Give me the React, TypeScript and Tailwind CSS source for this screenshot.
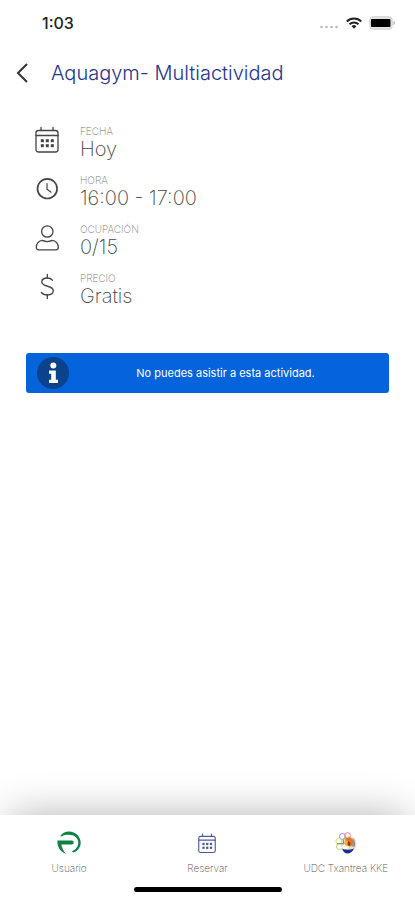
import React from 'react';

const CalendarIcon: React.FC<{ className?: string; strokeWidth?: number }> = ({ className, strokeWidth = 1.3 }) => (
  <svg viewBox="0 0 26 28" fill="none" stroke="currentColor" strokeWidth={strokeWidth} strokeLinecap="round" className={className} aria-hidden="true">
    <rect x="2" y="4.500" width="22" height="21.500" rx="2.500" />
    <path d="M2 9.500h22M7 1.500v3M19 1.500v3" />
    <g fill="currentColor" stroke="none">
      <rect x="6.800" y="13.200" width="3" height="3" />
      <rect x="11.800" y="13.200" width="3" height="3" />
      <rect x="16.800" y="13.200" width="3" height="3" />
      <rect x="6.800" y="18.200" width="3" height="3" />
      <rect x="11.800" y="18.200" width="3" height="3" />
      <rect x="16.800" y="18.200" width="3" height="3" />
    </g>
  </svg>
);

const ClockIcon = () => (
  <svg viewBox="0 0 26 28" fill="none" stroke="currentColor" strokeLinecap="round" className="h-7 w-[26px]" aria-hidden="true">
    <circle cx="13.300" cy="13.700" r="9.800" strokeWidth="1.700" />
    <path d="M13 8.500v5.700l4 3" strokeWidth="1.200" />
  </svg>
);

const PersonIcon = () => (
  <svg viewBox="0 0 26 28" fill="none" stroke="currentColor" strokeWidth="1.300" className="h-7 w-[26px]" aria-hidden="true">
    <circle cx="13.300" cy="7.500" r="5.700" />
    <path d="M8.500 16.400c3 1.500 6.600 1.500 9.600 0 3.800.3 6.200 3.400 6.200 6.900 0 1.500-.8 2.500-2.300 2.500H4.600c-1.500 0-2.300-1-2.300-2.500 0-3.500 2.400-6.600 6.200-6.900z" />
  </svg>
);

const DollarIcon = () => (
  <svg viewBox="0 0 26 28" fill="none" stroke="currentColor" strokeWidth="1.300" strokeLinecap="round" className="h-7 w-[26px]" aria-hidden="true">
    <path d="M13.300 1.500V5M13.300 22v3.500" />
    <path d="M18.400 7.200C17.200 5.700 15.500 5 13.300 5 10 5 7.800 6.600 7.800 9c0 5.500 11.500 3 11.500 8.600 0 2.700-2.300 4.400-5.800 4.400-2.700 0-4.900-.9-6.100-2.500" />
  </svg>
);

// "P" abierta dentro de un círculo
const UserLogo = () => (
  <svg viewBox="0 0 24 24" fill="none" className="size-6" aria-hidden="true">
    <path d="M3 5.200C5 2.200 8.300.5 12 .5 18.500.5 23.700 5.500 23.700 11.800c0 4.700-3.200 8.600-7.700 9.700l-1-1.300c3.800-1.400 6.300-4.600 6.300-8.400 0-4.900-4-8-9.300-8-3 0-5.600.5-7 1.400z" fill="#0d8045" />
    <path d="M.4 9.600h14.400a1.900 1.900 0 0 1 0 3.800H4.300c.6 3.600 2.100 6.600 4.900 9.600C3.800 21.300.1 16.600.4 9.600z" fill="#0d8045" />
  </svg>
);

const ClubLogo = () => (
  <svg viewBox="0 0 22 22" fill="none" className="size-[22px]" aria-hidden="true">
    <circle cx="13.500" cy="12" r="8" fill="#eadbd0" />
    <circle cx="7.500" cy="4.500" r="3" stroke="#8b91d0" />
    <circle cx="12.500" cy="3.700" r="3" stroke="#ef7b8d" />
    <circle cx="3.800" cy="9.500" r="3" stroke="#d8dc70" />
    <circle cx="4.500" cy="14.500" r="3" stroke="#b5d37a" />
    <path d="M2 11.500h7M8.500 8v8" stroke="#6aa878" />
    <path d="M10.500 6.500c3-2.500 8-.5 8 4l-2.500 4-3-1-3 1z" fill="#d97a20" />
    <path d="M10 8l3 1 1 4-3 2-2-3z" fill="#f0b52c" />
    <path d="M13 9l2.500 2-1 3.500-2-2z" fill="#9c2833" />
    <path d="M17.500 6c2.500 2 3.500 6 2 9l-3-1c1.500-2 2-5 1-8z" fill="#98908c" />
    <path d="M9 12l5 4-6 2-2-3z" fill="#fff" />
    <path d="M7 16.500c3 1.600 8 1.600 12 0-1.500 3.500-4 5-6.500 5S8.200 19.800 7 16.500z" fill="#17308f" />
  </svg>
);

const details = [
  { label: 'FECHA', value: 'Hoy', icon: <CalendarIcon className="h-7 w-[26px]" /> },
  { label: 'HORA', value: '16:00 - 17:00', icon: <ClockIcon /> },
  { label: 'OCUPACIÓN', value: '0/15', icon: <PersonIcon /> },
  { label: 'PRECIO', value: 'Gratis', icon: <DollarIcon /> },
];

const tabs = [
  { name: 'Usuario', icon: <UserLogo /> },
  { name: 'Reservar', icon: <CalendarIcon className="h-[21px] w-5 text-[#4c5a9c]" strokeWidth={1.5} /> },
  { name: 'UDC Txantrea KKE', icon: <ClubLogo /> },
];

const StatusBar = () => (
  <div className="flex h-[46px] items-center justify-between pr-[19px] pl-[42px] text-[#222]">
    <span className="font-['Inter',sans-serif] text-base font-medium">1:03</span>
    <div className="flex items-center gap-[7px]">
      <svg viewBox="0 0 20 4" className="mt-2 h-1 w-5" fill="#b8b8b8" aria-hidden="true">
        <circle cx="2.500" cy="2" r="1.300" />
        <circle cx="7.500" cy="2" r="1.300" />
        <circle cx="12.500" cy="2" r="1.300" />
        <circle cx="17.500" cy="2" r="1.300" />
      </svg>
      <svg viewBox="0 0 16 12" className="h-3 w-4" fill="none" stroke="currentColor" strokeWidth="2" aria-hidden="true">
        <path d="M.8 4.500a10.300 10.300 0 0 1 14.400 0M3.500 7.300a6.400 6.400 0 0 1 9 0" />
        <path d="M5.600 9.300a3.400 3.400 0 0 1 4.800 0L8 11.800z" fill="currentColor" stroke="none" />
      </svg>
      <svg viewBox="0 0 27 14" className="h-[14px] w-[27px]" aria-hidden="true">
        <rect x="0.800" y="0.800" width="22.400" height="12.400" rx="3" fill="#e4e4e4" stroke="#cfcfcf" />
        <rect x="2" y="3" width="19.500" height="8" rx="1" fill="#000" />
        <path d="M24.500 5c2 .6 2 3.400 0 4z" fill="#b5b5b5" />
      </svg>
    </div>
  </div>
);

const App: React.FC = () => {
  return (
    <div className="flex min-h-screen flex-col overflow-hidden bg-white font-['Inter','Liberation_Sans',sans-serif]">
      <StatusBar />

      <header className="flex h-[54px] items-center gap-5 pl-[15px]">
        <button type="button" aria-label="Volver" className="text-[#333]">
          <svg viewBox="0 0 16 22" fill="none" stroke="currentColor" strokeWidth="2" className="h-[22px] w-4" aria-hidden="true">
            <path d="M12 2L3 11l9 9" />
          </svg>
        </button>
        <h1 className="text-xl font-light text-[#25358a]">Aquagym- Multiactividad</h1>
      </header>

      <main className="flex flex-1 flex-col px-[26px] pt-[25px]">
        <dl className="flex flex-col gap-[13px] pl-2">
          {details.map((item) => (
            <div key={item.label} className="flex gap-5 text-[#444]">
              <div className="w-[26px] pt-px">{item.icon}</div>
              <div>
                <dt className="text-[10px] leading-3 font-extralight text-[#777]">{item.label}</dt>
                <dd className="text-xl leading-6 font-extralight">{item.value}</dd>
              </div>
            </div>
          ))}
        </dl>

        <div role="status" className="mt-[45px] flex h-10 items-center gap-1 rounded-[3px] bg-[#0563db] px-[11px] text-white">
          <svg viewBox="0 0 32 32" className="size-8 shrink-0" aria-hidden="true">
            <circle cx="16" cy="16" r="16" fill="#0a428c" />
            <circle cx="16.300" cy="8.500" r="3" fill="#fff" />
            <path d="M12 13.500h6.800v9.300H21V26h-9v-3.200h2.200v-6.100H12z" fill="#fff" />
          </svg>
          <p className="flex-1 text-center text-[11px] font-normal">No puedes asistir a esta actividad.</p>
        </div>
      </main>

      <footer className="bg-white">
        <nav className="grid h-[72px] grid-cols-3 pt-4 shadow-[0_-10px_40px_-10px_rgba(0,0,0,0.3)] [clip-path:inset(-60px_0_0_0)]">
          {tabs.map((tab) => (
            <button key={tab.name} type="button" className="flex flex-col items-center gap-[5px]">
              <span className="flex h-6 items-center">{tab.icon}</span>
              <span className="text-[10px] leading-4 font-extralight text-[#555]">{tab.name}</span>
            </button>
          ))}
        </nav>
        <div className="mx-auto mb-2 h-[5px] w-[148px] rounded-full bg-black" />
      </footer>
    </div>
  );
};

export default App;
